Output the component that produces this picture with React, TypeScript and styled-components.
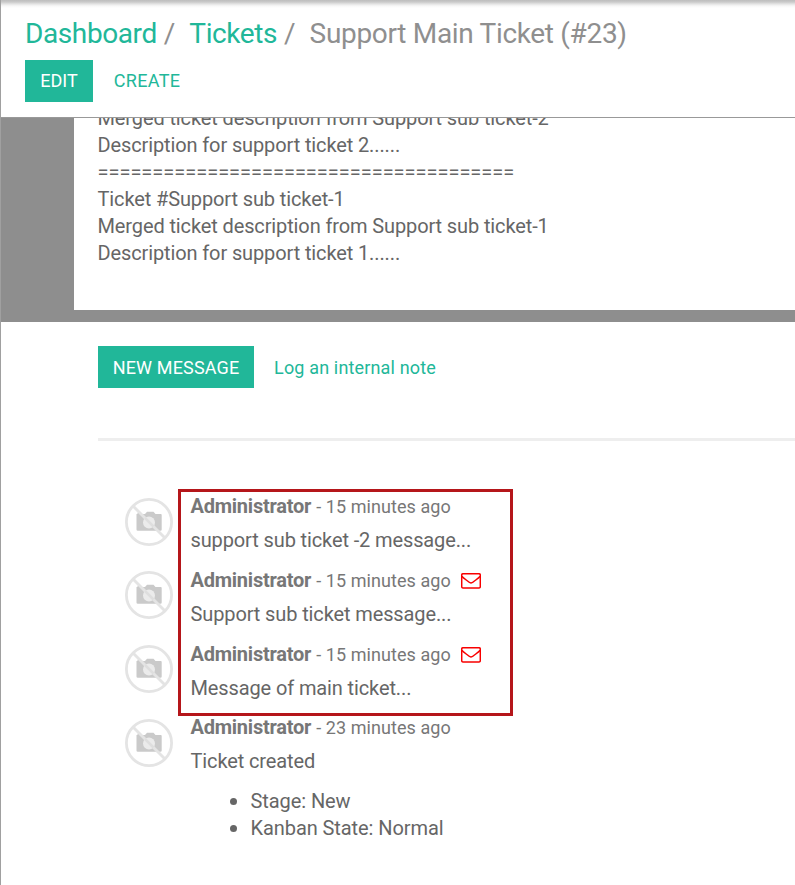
import React from 'react';
import styled, { createGlobalStyle } from 'styled-components';

const teal = '#21b799';

const GlobalStyle = createGlobalStyle`
  *, *::before, *::after { box-sizing: border-box; }
  html, body { margin: 0; background: #fff; overflow: hidden; }
  body { font-family: Roboto, sans-serif; font-size: 20px; line-height: 27px; letter-spacing: -0.12px; color: #666; }
`;

const Page = styled.div`
  width: 795px;
  height: 885px;
  overflow: hidden;
  border-left: 1px solid #a0a0a0;
  background: #fff;
`;

const ControlPanel = styled.header`
  height: 118px;
  padding: 14px 0 0 24px;
  border-bottom: 1px solid #999;
  background: linear-gradient(#bdbdbd 0, #cacaca 2px, #e4e4e4 4px, #f8f8f8 6px, #fff 8px);
`;

const Breadcrumb = styled.nav`
  display: flex;
  height: 40px;
  line-height: 40px;
  font-size: 28px;
  letter-spacing: -0.32px;
  color: #8f8f8f;
  white-space: nowrap;
`;

const Crumb = styled.a`
  color: ${teal};
  letter-spacing: -0.4px;
`;

const Separator = styled.span`
  width: 32.5px;
  padding-left: 7px;
`;

const ButtonRow = styled.div<{ $top: number }>`
  display: flex;
  margin-top: ${(p) => p.$top}px;
`;

const Button = styled.button<{ $width: number; $primary?: boolean; $spacing?: number; $drop?: number }>`
  width: ${(p) => p.$width}px;
  height: 42px;
  padding: ${(p) => p.$drop ?? 0}px 0 0;
  border: 0;
  font: 18px/40px Roboto, sans-serif;
  letter-spacing: ${(p) => p.$spacing ?? 0.15}px;
  text-align: center;
  white-space: nowrap;
  color: ${(p) => (p.$primary ? '#fff' : teal)};
  background: ${(p) => (p.$primary ? teal : 'transparent')};
`;

const SheetArea = styled.section`
  height: 204px;
  padding: 0 0 12px 73px;
  background: #8e8e8e;
`;

const Sheet = styled.div`
  height: 192px;
  padding-left: 23.5px;
  overflow: hidden;
  background: #fff;
`;

const Description = styled.div`
  margin-top: -13px;
`;

const Line = styled.div<{ $rule?: boolean }>`
  white-space: nowrap;
  letter-spacing: ${(p) => (p.$rule ? '-0.01px' : 'inherit')};
`;

const Chatter = styled.section`
  padding-left: 97px;
`;

const Thread = styled.div`
  position: relative;
  margin-top: 50px;
  padding: 53px 0 0 27px;
  border-top: 3px solid #eee;
`;

const Message = styled.article<{ $height: number }>`
  display: flex;
  height: ${(p) => p.$height}px;
`;

const Avatar = styled.svg<{ $top: number }>`
  flex: none;
  width: 48px;
  height: 48px;
  margin: ${(p) => p.$top}px 17.5px 0 0;
`;

const Content = styled.div`
  white-space: nowrap;
`;

const Meta = styled.div`
  display: flex;
  height: 27px;
  margin-top: -1px;
  color: #777;
  font-size: 18px;
  letter-spacing: 0.07px;
`;

const Author = styled.strong`
  width: 125.7px;
  font-size: 20px;
  font-weight: 700;
  letter-spacing: -0.24px;
`;

const Age = styled.span`
  width: 145.3px;
`;

const Body = styled.p`
  margin: 7px 0 0;
`;

const Changes = styled.ul`
  margin: 13px 0 0;
  padding: 0;
  list-style: none;
`;

const Change = styled.li`
  display: flex;
  align-items: center;
  padding-left: 39px;
  letter-spacing: -0.08px;

  &::before {
    content: '';
    width: 7px;
    height: 7px;
    margin-right: 14px;
    border-radius: 50%;
    background: #666;
  }
`;

const Envelope = styled.svg`
  width: 20px;
  height: 16px;
  margin-top: 6px;
`;

const Highlight = styled.div`
  position: absolute;
  top: 48px;
  left: 80px;
  width: 335px;
  height: 227px;
  border: 3px solid #b5161a;
`;

const NoPhoto = ({ top }: { top: number }) => (
  <Avatar $top={top} viewBox="0 0 48 48" fill="none">
    <path d="M11.5 16h1v-1.200h3.500v1.200h4l2-2.300h6.500l2 2.300h5.300q.9 0 .9.9V31.500q0 1.300-1.300 1.300H12.800q-1.300 0-1.300-1.300z" fill="#cacaca" />
    <path d="M8 8l32 32" stroke="#e4e4e4" strokeWidth="2.8" />
    <circle cx="24" cy="24.500" r="6" fill="#ebebeb" />
    <path d="M20 20l8.500 8.500" stroke="#dedede" strokeWidth="2.500" />
    <circle cx="24" cy="24" r="22.600" stroke="#e4e4e4" strokeWidth="2.800" />
  </Avatar>
);

const Mail = () => (
  <Envelope viewBox="0 0 20 16" fill="none" stroke="#f80000" strokeWidth="1.5">
    <rect x=".7" y=".8" width="18.600" height="14.200" rx="1.200" />
    <path d="M.8 3.200c1.500 1.800 4.800 4 7 5.800q2.200 1.900 4.400 0c2.200-1.800 5.500-4 7-5.800" />
  </Envelope>
);

const messages = [
  { age: '15 minutes ago', body: 'support sub ticket -2 message...', mail: false, height: 74, avatarTop: 4 },
  { age: '15 minutes ago', body: 'Support sub ticket message...', mail: true, height: 74, avatarTop: 3 },
  { age: '15 minutes ago', body: 'Message of main ticket...', mail: true, height: 73, avatarTop: 3 },
  { age: '23 minutes ago', body: 'Ticket created', mail: false, height: 130, avatarTop: 4, changes: ['Stage: New', 'Kanban State: Normal'] },
];

const description = [
  'Merged ticket description from Support sub ticket-2',
  'Description for support ticket 2......',
  '======================================',
  'Ticket #Support sub ticket-1',
  'Merged ticket description from Support sub ticket-1',
  'Description for support ticket 1......',
];

export default function App() {
  return (
    <Page>
      <GlobalStyle />
      <ControlPanel>
        <Breadcrumb>
          <Crumb>Dashboard</Crumb>
          <Separator>/</Separator>
          <Crumb>Tickets</Crumb>
          <Separator>/</Separator>
          <span>Support Main Ticket (#23)</span>
        </Breadcrumb>
        <ButtonRow $top={6}>
          <Button $width={68} $spacing={0} $primary>EDIT</Button>
          <Button $width={108} $spacing={0.3}>CREATE</Button>
        </ButtonRow>
      </ControlPanel>
      <SheetArea>
        <Sheet>
          <Description>
            {description.map((line) => (
              <Line key={line} $rule={line.startsWith('=')}>{line}</Line>
            ))}
          </Description>
        </Sheet>
      </SheetArea>
      <Chatter>
        <ButtonRow $top={24}>
          <Button $width={156} $drop={2} $primary>NEW MESSAGE</Button>
          <Button $width={202} $drop={2}>Log an internal note</Button>
        </ButtonRow>
        <Thread>
          {messages.map((m) => (
            <Message key={m.body} $height={m.height}>
              <NoPhoto top={m.avatarTop} />
              <Content>
                <Meta>
                  <Author>Administrator</Author>
                  <Age>- {m.age}</Age>
                  {m.mail && <Mail />}
                </Meta>
                <Body>{m.body}</Body>
                {m.changes && (
                  <Changes>
                    {m.changes.map((c) => <Change key={c}>{c}</Change>)}
                  </Changes>
                )}
              </Content>
            </Message>
          ))}
          <Highlight />
        </Thread>
      </Chatter>
    </Page>
  );
}
